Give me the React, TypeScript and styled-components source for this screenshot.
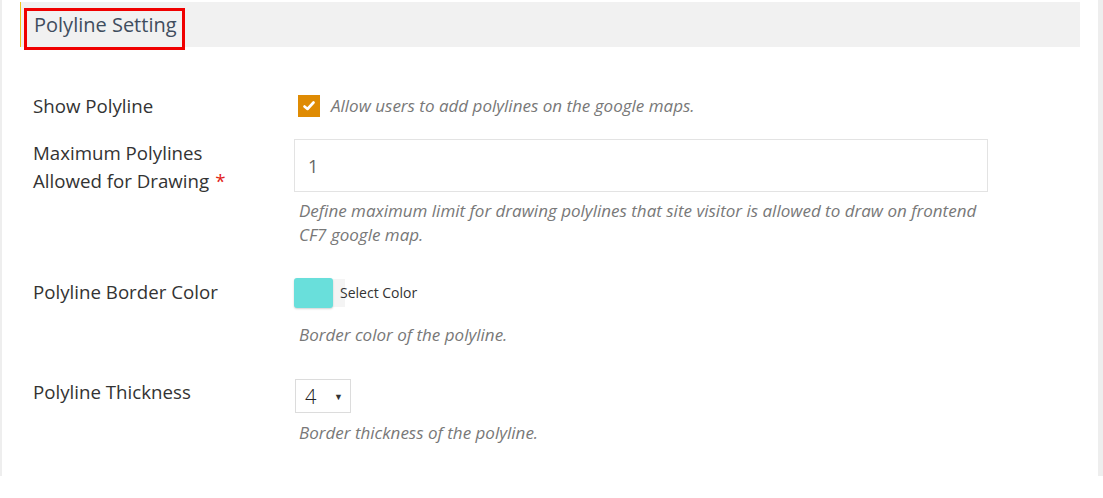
import styled, { createGlobalStyle } from "styled-components"

const GlobalStyle = createGlobalStyle`
    body {
        margin: 0;
        background: #fff;
        font-family: "Open Sans", "Liberation Sans", sans-serif;
    }
`

const Panel = styled.div`
    width: 1103px;
    height: 476px;
    box-sizing: border-box;
    border-left: 2px solid #eeeeee;
    border-right: 5px solid #eeeeee;
    padding-top: 2px;
`

const SectionHeader = styled.div`
    margin: 0 18px;
    height: 45px;
    background: #f1f1f1;
    border-left: 1px solid #f0c419;
    display: flex;
    align-items: flex-start;
    padding: 6px 0 0 3px;
    box-sizing: border-box;
`

const HeaderTitle = styled.h3`
    margin: 0;
    width: 161px;
    height: 42px;
    box-sizing: border-box;
    border: 3px solid #f00000;
    padding: 0 0 0 7px;
    font-size: 20px;
    font-weight: 400;
    line-height: 28px;
    color: #3f4d5e;
    white-space: nowrap;
`

const Form = styled.div`
    padding: 45px 0 0 31px;
    display: grid;
`

const Row = styled.div<{ $after: number }>`
    display: grid;
    grid-template-columns: 261px 1fr;
    align-items: start;
    margin-bottom: ${(p) => p.$after}px;
`

const Label = styled.div`
    font-size: 18.7px;
    line-height: 28px;
    color: #333333;
`

const Required = styled.span`
    color: #e2231a;
    margin-left: 6px;
`

const Field = styled.div`
    display: flex;
    flex-direction: column;
    align-items: flex-start;
`

const InlineField = styled.div`
    display: flex;
    align-items: center;
    height: 28px;
    gap: 11px;
`

const CheckBox = styled.span`
    width: 22px;
    height: 22px;
    margin-left: 4px;
    background: #df8b03;
    display: flex;
    align-items: center;
    justify-content: center;
`

const Description = styled.p<{ $top?: number }>`
    margin: ${(p) => p.$top ?? 0}px 0 0;
    padding-left: 5px;
    max-width: 700px;
    font-size: 17px;
    line-height: 24px;
    font-style: italic;
    color: #787878;
`

const InlineDescription = styled(Description)`
    padding-left: 0;
    line-height: 28px;
`

const TextInput = styled.div`
    width: 694px;
    height: 53px;
    box-sizing: border-box;
    border: 1px solid #e3e3e3;
    padding-left: 13px;
    display: flex;
    align-items: center;
    font-size: 18px;
    color: #666;
`

const ColorPicker = styled.div`
    display: flex;
    align-items: center;
    height: 30px;
`

const Swatch = styled.span<{ $color: string }>`
    width: 39px;
    height: 30px;
    border-radius: 3px;
    background: ${(p) => p.$color};
    box-shadow: 0 1px 2px rgba(0, 0, 0, 0.18);
    position: relative;
    z-index: 1;
`

const SelectColor = styled.span`
    height: 28px;
    padding: 0 0 0 7px;
    font-size: 14px;
    line-height: 28px;
    color: #333;
    width: 80px;
    background: linear-gradient(to right, #f4f4f4 12px, #fff 12px);
`

const Select = styled.div`
    margin: 1px 0 0 1px;
    width: 56px;
    height: 34px;
    box-sizing: border-box;
    border: 1px solid #dcdcdc;
    display: flex;
    align-items: center;
    justify-content: space-between;
    padding: 0 7px 0 9px;
    font-size: 20px;
    font-weight: 300;
    color: #222;
`

const Caret = styled.span`
    font-size: 9px;
    color: #333;
`

export default function App() {
    return (
        <>
            <GlobalStyle />
            <Panel>
                <SectionHeader>
                    <HeaderTitle>Polyline Setting</HeaderTitle>
                </SectionHeader>
                <Form>
                    <Row $after={19}>
                        <Label>Show Polyline</Label>
                        <InlineField>
                            <CheckBox>
                                <svg width="12" height="10" viewBox="0 0 12 10">
                                    <polyline points="1.5,5.5 4.5,8 10.5,1.5" fill="none" stroke="#fff" strokeWidth="2.6" strokeLinecap="round" strokeLinejoin="round" />
                                </svg>
                            </CheckBox>
                            <InlineDescription>Allow users to add polylines on the google maps.</InlineDescription>
                        </InlineField>
                    </Row>
                    <Row $after={31}>
                        <Label>
                            Maximum Polylines
                            <br />
                            Allowed for Drawing<Required>*</Required>
                        </Label>
                        <Field>
                            <TextInput>1</TextInput>
                            <Description $top={7}>
                                Define maximum limit for drawing polylines that site visitor is allowed to draw on frontend CF7 google map.
                            </Description>
                        </Field>
                    </Row>
                    <Row $after={31}>
                        <Label>Polyline Border Color</Label>
                        <Field>
                            <ColorPicker>
                                <Swatch $color="#69dfdb" />
                                <SelectColor>Select Color</SelectColor>
                            </ColorPicker>
                            <Description $top={15}>Border color of the polyline.</Description>
                        </Field>
                    </Row>
                    <Row $after={0}>
                        <Label>Polyline Thickness</Label>
                        <Field>
                            <Select>
                                4<Caret>▼</Caret>
                            </Select>
                            <Description $top={8}>Border thickness of the polyline.</Description>
                        </Field>
                    </Row>
                </Form>
            </Panel>
        </>
    )
}
